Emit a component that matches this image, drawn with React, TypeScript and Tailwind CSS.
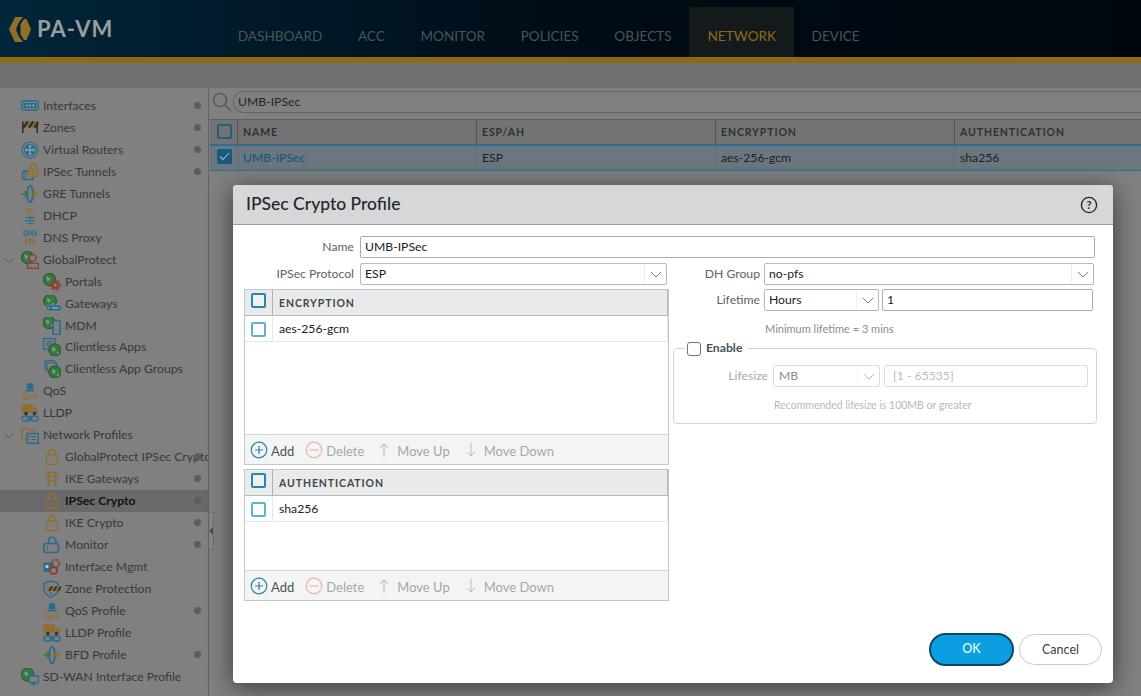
import React from "react";

const T = "#2a6a8a", G = "#8f6f2f", N = "#2e7d3a", R = "#8f3f30", D = "#2b2f32";

const S = ({ children }: { children: React.ReactNode }) => (
  <svg width="18" height="18" viewBox="0 0 18 18" fill="none" strokeWidth="1.2" className="shrink-0">{children}</svg>
);
const Lock = () => (
  <S><rect x="3.5" y="7" width="11" height="9.5" rx="1.2" stroke={G} strokeWidth="1.4" /><path d="M6 7V4.500a3 3 0 0 1 6 0V7" stroke={G} strokeWidth="1.4" /><circle cx="9" cy="11.500" r="1" fill={G} /></S>
);
const Globe = ({ x = 0, y = 0, r = 6.2 }: { x?: number; y?: number; r?: number }) => (
  <g transform={`translate(${x} ${y})`}><circle cx="6.500" cy="6.500" r={r} fill={N} stroke={D} strokeWidth="0.7" /><path d="M3 3.500l3.500 1 1 2-3 2zM8.500 8l2 1-1 2-1-1z" fill="#8a8f8a" /></g>
);
const icons: Record<string, React.ReactNode> = {
  interfaces: <S><rect x="0.700" y="4" width="16.600" height="9" rx="1.500" stroke={T} strokeWidth="1.300" /><rect x="2.500" y="6" width="13" height="5" fill={T} /><path d="M5 8.500h1.500M8.200 8.500h1.500M11.500 8.500H13" stroke="#b8c4cc" strokeWidth="1.300" /></S>,
  zones: <S><rect x="1" y="2.500" width="16" height="6" fill={G} /><path d="M2.500 8.500l4.300-6M8 8.500l4.300-6M13.500 8.500l3.500-5" stroke={D} strokeWidth="2.200" /><path d="M1.800 2.500V14M16.200 2.500V14" stroke={D} strokeWidth="1.600" /></S>,
  routers: <S><circle cx="9" cy="9" r="8" stroke={T} strokeWidth="1.200" /><circle cx="9" cy="9" r="6" fill={T} /><path d="M9 4.500v9M4.500 9h9M7.500 6L9 4.500 10.500 6M7.500 12L9 13.500 10.500 12M6 7.500L4.500 9 6 10.500M12 7.500L13.500 9 12 10.500" stroke="#b8c4cc" strokeWidth="0.800" /></S>,
  tunnels: <S><path d="M3 8h9v8.500H3a1.500 4 0 0 1 0-8.500z" stroke={T} strokeWidth="1.300" /><ellipse cx="3" cy="12.200" rx="1.500" ry="4.200" stroke={T} /><rect x="7.500" y="5.500" width="9.500" height="8" rx="1" fill="#8a7a5a" stroke={G} /><path d="M9.500 5.500V3.500a2.700 2.700 0 0 1 5.400 0v2" stroke={G} strokeWidth="1.400" /><circle cx="12.200" cy="9.200" r="1.300" fill={G} /></S>,
  gre: <S><ellipse cx="9" cy="9" rx="2.800" ry="8.300" stroke={T} strokeWidth="1.700" /><path d="M0.500 9h5.500M3.500 6l3 3-3 3" stroke={N} strokeWidth="1.600" /><path d="M17.500 9H12M14.500 6l-3 3 3 3" stroke={G} strokeWidth="1.600" /></S>,
  dhcp: <S><text x="9" y="7" fontSize="8" fontWeight="700" textAnchor="middle" fill={G} fontFamily="Lato">IP</text><path d="M9 8v6M4.500 10.500h9M3.500 14h11M5.500 16.500h7" stroke={T} strokeWidth="1.200" /></S>,
  dns: <S><text x="9" y="6.500" fontSize="7" fontWeight="700" textAnchor="middle" fill={T} fontFamily="Lato">DNS</text><path d="M9 8v7M3.500 11h11M5 11v5M13 11v5" stroke={G} strokeWidth="1.300" /></S>,
  gp: <S><Globe /><circle cx="11.500" cy="7" r="3.500" fill="#7f7f7f" stroke={R} strokeWidth="1.500" /><path d="M6.500 17.300v-5h11v5z" fill="#7f7f7f" stroke={R} strokeWidth="1.300" /></S>,
  portals: <S><Globe /><circle cx="12.300" cy="12" r="4" fill={R} /><circle cx="12.300" cy="12" r="5" stroke={R} strokeDasharray="1.500 1.200" strokeWidth="1.500" /><circle cx="12.300" cy="12" r="1.500" fill="#8a8a8a" /></S>,
  gateways: <S><Globe x={0.500} y={-0.500} r={6.500} /><rect x="3.500" y="10" width="14.500" height="6" rx="1" fill={T} stroke="#8a9aa4" strokeWidth="0.600" /><path d="M5.500 13h1.500M9 13h6.500" stroke="#c0ccd4" /></S>,
  mdm: <S><Globe x={-0.500} y={-1} /><rect x="10" y="3.500" width="7" height="14" rx="1" fill="#7f7f7f" stroke={T} strokeWidth="1.600" /></S>,
  apps: <S><rect x="0.600" y="0.600" width="11.500" height="10.500" fill="#7f7f7f" stroke={T} strokeWidth="1.300" /><path d="M3 3.500h7M3 5.800h7M3 8h5" stroke={T} /><Globe x={5.500} y={5.500} /></S>,
  groups: <S><rect x="2" y="0.600" width="9.500" height="8" stroke={T} /><rect x="4" y="2.800" width="9.500" height="8.500" fill="#7f7f7f" stroke={T} /><Globe x={5.500} y={5.500} /></S>,
  qos: <S><path d="M9 1a3.300 3.300 0 0 1 3.300 3.300V7.500H5.700V4.300A3.300 3.300 0 0 1 9 1z" fill={T} /><path d="M4.500 8.700h9" stroke={T} strokeWidth="1.400" /><text x="9" y="17" fontSize="8" fontWeight="700" textAnchor="middle" fill={G} fontFamily="Lato">QoS</text></S>,
  lldp: <S><rect x="0.500" y="0.500" width="11.500" height="8.500" fill={G} /><path d="M12.500 3.500h2.500l2.500 3V9h-5z" fill={G} /><circle cx="5" cy="9.500" r="1.700" fill={D} /><circle cx="13.500" cy="9.500" r="1.700" fill={D} /><rect x="1" y="12" width="7.500" height="5" rx="2.500" stroke={T} strokeWidth="1.400" /><rect x="9.500" y="12" width="7.500" height="5" rx="2.500" stroke={T} strokeWidth="1.400" /><path d="M6 14.500h6" stroke={T} strokeWidth="1.400" /></S>,
  profiles: <S><path d="M1 2.500h6l2 2h5V7M1 2.500V13h4" stroke={G} strokeWidth="1.400" /><rect x="6" y="7.500" width="11.300" height="9.800" fill="#7f7f7f" stroke={T} strokeWidth="1.400" /><path d="M8 10.700h1M10.500 10.700H15M8 13.500h1M10.500 13.500H15" stroke={T} /></S>,
  lock: <Lock />,
  torii: <S><path d="M2 2.500h14M3.500 6.500h11M5.500 2.500V16.500M12.500 2.500V16.500M5.500 11h7" stroke={G} strokeWidth="1.500" /></S>,
  monitor: <S><rect x="1" y="7.500" width="14.500" height="9" rx="2" stroke={T} strokeWidth="1.500" /><path d="M5.500 7.500V5a3.700 3.700 0 0 1 7.400 0v4" stroke={T} strokeWidth="1.500" /><path d="M4.500 10v3.500" stroke={T} strokeWidth="1.200" /></S>,
  mgmt: <S><rect x="0.500" y="4.500" width="10" height="9.500" rx="1" fill={T} /><circle cx="4" cy="8.500" r="1.700" fill="#c0ccd4" /><circle cx="12.500" cy="5.500" r="3.800" stroke={R} strokeWidth="2" strokeDasharray="2 1" /><circle cx="10.500" cy="12.500" r="3.500" fill="#7f7f7f" stroke={R} strokeWidth="2" /></S>,
  shield: <S><path d="M8 0.800l7 2.500V9c0 4-3.500 6.500-7 8.300-3.500-1.800-7-4.300-7-8.300V3.300z" stroke={T} strokeWidth="1.400" /><rect x="4" y="6.500" width="14" height="4.500" fill={G} /><path d="M6 11l3.200-4.500M10.500 11l3.200-4.500M15 11l3-4.500" stroke={D} strokeWidth="1.700" /><path d="M8 12v2.500" stroke={T} strokeWidth="1.500" /></S>,
  sdwan: <S><Globe r={6.500} /><rect x="8" y="8" width="9.500" height="6.500" rx="1" fill="#7f7f7f" stroke={T} strokeWidth="1.400" /><path d="M10.500 16.500h4.500M12.700 14.500v2" stroke={T} strokeWidth="1.300" /></S>,
};

type Row = { t: string; i: string; lvl?: 0 | 1; dot?: boolean; open?: boolean; sel?: boolean; up?: boolean };
const rows: Row[] = [
  { t: "Interfaces", i: "interfaces", dot: true },
  { t: "Zones", i: "zones", dot: true },
  { t: "Virtual Routers", i: "routers", dot: true },
  { t: "IPSec Tunnels", i: "tunnels", dot: true },
  { t: "GRE Tunnels", i: "gre" },
  { t: "DHCP", i: "dhcp" },
  { t: "DNS Proxy", i: "dns" },
  { t: "GlobalProtect", i: "gp", open: true },
  { t: "Portals", i: "portals", lvl: 1 },
  { t: "Gateways", i: "gateways", lvl: 1 },
  { t: "MDM", i: "mdm", lvl: 1 },
  { t: "Clientless Apps", i: "apps", lvl: 1, up: true },
  { t: "Clientless App Groups", i: "groups", lvl: 1 },
  { t: "QoS", i: "qos" },
  { t: "LLDP", i: "lldp" },
  { t: "Network Profiles", i: "profiles", open: true },
  { t: "GlobalProtect IPSec Crypto", i: "lock", lvl: 1, dot: true },
  { t: "IKE Gateways", i: "torii", lvl: 1, dot: true },
  { t: "IPSec Crypto", i: "lock", lvl: 1, dot: true, sel: true },
  { t: "IKE Crypto", i: "lock", lvl: 1, dot: true },
  { t: "Monitor", i: "monitor", lvl: 1, dot: true },
  { t: "Interface Mgmt", i: "mgmt", lvl: 1 },
  { t: "Zone Protection", i: "shield", lvl: 1 },
  { t: "QoS Profile", i: "qos", lvl: 1, dot: true },
  { t: "LLDP Profile", i: "lldp", lvl: 1 },
  { t: "BFD Profile", i: "gre", lvl: 1, dot: true },
  { t: "SD-WAN Interface Profile", i: "sdwan" },
];

const Chevron = ({ c = "#7a8287" }: { c?: string }) => (
  <svg width="12" height="7" viewBox="0 0 12 7" fill="none"><path d="M1 1l5 5 5-5" stroke={c} strokeWidth="1" /></svg>
);

const Select = ({ v, w, off }: { v: string; w: string; off?: boolean }) => (
  <div className={`${w} h-[22px] flex items-center shrink-0 rounded-[2px] border ${off ? "border-[#dcdfe0] text-[#868c90] pl-[5px]" : "border-[#b4b8ba] text-[#1c2024] pl-[4px]"} bg-white`}>
    <span className="flex-1">{v}</span>
    <span className={`w-[22px] h-full flex items-center justify-center border-l ${off ? "border-[#f3f4f4]" : "border-[#eeeff0]"}`}>
      <Chevron c={off ? "#b4b9bc" : "#7a8287"} />
    </span>
  </div>
);

const Box = ({ dark }: { dark?: boolean }) => (
  <span className={`block w-[15px] h-[15px] rounded-[2px] border-2 ${dark ? "border-[#2587ad] bg-[#f0f2f2]" : "border-[#5cb2d4] bg-white"}`} />
);

const Toolbar = () => (
  <div className="h-[30px] flex items-center bg-[#f3f5f5] border-t border-[#d0d3d5] pl-[5px] text-[13px] text-[#a3a8ab]">
    <svg width="18" height="18" viewBox="0 0 18 18" fill="none" className="mr-[3px]"><circle cx="9" cy="9" r="7.800" stroke="#2c80a8" strokeWidth="1.200" /><path d="M9 5v8M5 9h8" stroke="#2c80a8" strokeWidth="1.200" /></svg>
    <span className="text-[#4b5358] mr-[11px] pt-[4px]">Add</span>
    <svg width="18" height="18" viewBox="0 0 18 18" fill="none" className="mr-[3px]"><circle cx="9" cy="9" r="7.800" stroke="#eeb4b0" strokeWidth="1.200" /><path d="M4.500 9h9" stroke="#eeb4b0" strokeWidth="1.200" /></svg>
    <span className="mr-[15px] pt-[4px]">Delete</span>
    <svg width="10" height="16" viewBox="0 0 10 16" fill="none" className="mr-[8px]"><path d="M5 15V2M1 6l4-4 4 4" stroke="#b4b9bc" strokeWidth="1" /></svg>
    <span className="mr-[16px] pt-[4px]">Move Up</span>
    <svg width="10" height="16" viewBox="0 0 10 16" fill="none" className="mr-[8px]"><path d="M5 1v13M1 10l4 4 4-4" stroke="#b4b9bc" strokeWidth="1" /></svg>
    <span className="pt-[4px]">Move Down</span>
  </div>
);

const MemberTable = ({ title, item, h }: { title: string; item: string; h: string }) => (
  <div className={`${h} flex flex-col border border-[#c4c7c9]`}>
    <div className="h-[26px] flex items-center bg-[#e9ebeb] border-b border-r border-[#b4b8ba]">
      <span className="w-[28px] h-full pl-[6px] pt-[3px] border-r border-[#aeb2b4] shrink-0"><Box dark /></span>
      <span className="pl-[6px] pt-[2px] text-[10.500px] font-bold tracking-[0.900px] text-[#3f474c]">{title}</span>
    </div>
    <div className="h-[26px] flex items-center border-b border-r border-[#e6e8e8]">
      <span className="w-[28px] h-[24px] pl-[6px] pt-[5px] border-r border-[#e6e8e8] shrink-0"><Box /></span>
      <span className="pl-[6px] pt-[1px] text-[#1c2024]">{item}</span>
    </div>
    <div className="flex-1" />
    <Toolbar />
  </div>
);

export default function App() {
  return (
    <div className="relative w-[1141px] h-[696px] overflow-hidden bg-[#808080] [font-family:Lato,sans-serif] text-[12.200px] flex flex-col">
      <header className="h-[57px] shrink-0 flex items-end bg-gradient-to-r from-[#02263a] via-[#000c16] to-[#00070c]">
        <div className="w-[220px] h-full flex items-center pl-[9px] shrink-0">
          <svg width="22" height="25" viewBox="0 0 22 25" fill="none" className="mr-[6px] mt-[1px]"><path d="M6 0h8L9.500 6 7 12.500 9.500 19l4.500 6H6L0 12.500z" fill="#8f7029" /><path d="M15 2h2.500L22 12.500 17.500 23H15l-3.500-5.500v-10z" fill="#8f7029" /></svg>
          <span className="text-[22px] font-bold tracking-[1px] text-[#9a9e9e]">PA-VM</span>
        </div>
        <nav className="flex h-[50px] text-[13.600px] text-[#4c5357]">
          {["DASHBOARD", "ACC", "MONITOR", "POLICIES", "OBJECTS"].map((n) => (
            <span key={n} className="px-[17.800px] pt-[19px]">{n}</span>
          ))}
          <span className="px-[18px] pt-[19px] bg-[#14191c] text-[#8c6c18]">NETWORK</span>
          <span className="px-[17.500px] pt-[19px]">DEVICE</span>
        </nav>
      </header>
      <div className="h-[6px] shrink-0 bg-[#8c6a16]" />
      <div className="h-[25px] shrink-0 bg-[#6f7072]" />
      <div className="flex flex-1 min-h-0">
        <aside className="relative w-[209px] shrink-0 border-r border-[#626364] pt-[7px] text-[#34393c] overflow-hidden">
          {rows.map((r) => (
            <div key={r.t} className={`relative h-[22px] flex items-center ${r.up ? "-mt-[1px]" : ""} ${r.sel ? "bg-[#69696b] font-bold text-[#101214]" : ""} ${r.lvl ? "pl-[43px]" : "pl-[21px]"}`}>
              {r.open && <span className="absolute left-[3px] top-[8px]"><Chevron c="#5a5f62" /></span>}
              {icons[r.i]}
              <span className="ml-[4px] whitespace-nowrap">{r.t}</span>
              {r.dot && <span className="absolute left-[194px] top-[7px] w-[7px] h-[7px] rounded-full bg-[#5b5c5d]" />}
            </div>
          ))}
        </aside>
        <main className="relative flex-1 min-w-0 pt-[3px] text-[#1c1f21]">
          <div className="flex items-center h-[22px] pl-[3px]">
            <svg width="20" height="20" viewBox="0 0 20 20" fill="none" className="shrink-0 mr-[1px]"><circle cx="8" cy="8" r="6.500" stroke="#4c5053" strokeWidth="1.200" /><path d="M13 13l6 6" stroke="#4c5053" strokeWidth="1.200" /></svg>
            <div className="flex-1 h-full rounded-l-[10px] border border-r-0 border-[#626465] pl-[4px] flex items-center text-[#222527]">UMB-IPSec</div>
          </div>
          <div className="mt-[6px] ml-[1px] h-[27px] flex items-center bg-[#737373] border-t border-b-2 border-t-[#5f6061] border-b-[#2f6f8d] text-[10.500px] font-bold tracking-[0.900px] text-[#2d3134]">
            <span className="w-[28px] h-full pl-[7px] pt-[4px] border-r border-[#555] shrink-0"><span className="block w-[15px] h-[15px] rounded-[2px] border-2 border-[#1f5f7f]" /></span>
            <span className="w-[239px] pl-[5px] pt-[2px] h-full flex items-center border-r border-[#555]">NAME</span>
            <span className="w-[239px] pl-[5px] pt-[2px] h-full flex items-center border-r border-[#555]">ESP/AH</span>
            <span className="w-[239px] pl-[5px] pt-[2px] h-full flex items-center border-r border-[#555]">ENCRYPTION</span>
            <span className="pl-[5px] pt-[2px]">AUTHENTICATION</span>
          </div>
          <div className="ml-[1px] h-[25px] flex items-center bg-[#6a7780] border-b border-[#2f7090]">
            <span className="w-[28px] h-full pl-[7px] pt-[3px] border-r border-[#667078] shrink-0">
              <span className="flex w-[15px] h-[15px] rounded-[2px] bg-[#165a80] items-center justify-center">
                <svg width="11" height="9" viewBox="0 0 11 9" fill="none"><path d="M1 4.500l3 3 6-6.500" stroke="#a8bac6" strokeWidth="1.100" /></svg>
              </span>
            </span>
            <span className="w-[239px] pl-[5px] pt-[1px] h-full flex items-center border-r border-[#667078] text-[#0e5478]">UMB-IPSec</span>
            <span className="w-[239px] pl-[5px] pt-[1px] h-full flex items-center border-r border-[#667078]">ESP</span>
            <span className="w-[239px] pl-[5px] pt-[1px] h-full flex items-center border-r border-[#667078]">aes-256-gcm</span>
            <span className="pl-[5px] pt-[1px]">sha256</span>
          </div>
        </main>
      </div>
      <div className="absolute left-[209px] top-[512px] w-[5px] h-[38px] bg-[#868686] border-r border-y border-[#727272] flex items-center">
        <span className="w-0 h-0 border-y-[4px] border-y-transparent border-r-[4px] border-r-[#4c4c4c]" />
      </div>

      <div className="absolute left-[233px] top-[185px] w-[880px] h-[498px] flex flex-col rounded-[4px] bg-white shadow-[0_4px_24px_rgba(0,0,0,0.55)] overflow-hidden">
        <div className="h-[40px] shrink-0 flex items-center justify-between pl-[13px] pr-[15px] bg-[#d5d7d9] border-b border-[#989da1]">
          <span className="text-[17.500px] font-medium text-[#22272b]">IPSec Crypto Profile</span>
          <svg width="18" height="18" viewBox="0 0 18 18" fill="none"><circle cx="9" cy="9" r="7.600" stroke="#22272b" strokeWidth="1.400" /><text x="9" y="13" fontSize="11" fontWeight="700" textAnchor="middle" fill="#22272b" fontFamily="Lato">?</text></svg>
        </div>
        <div className="flex-1 flex flex-col pl-[11px] pr-[11px] pt-[11px] pb-[17px] text-[#5a6267]">
          <div className="flex items-center gap-[6px] pr-[7px]">
            <span className="w-[110px] text-right shrink-0">Name</span>
            <div className="flex-1 h-[22px] rounded-[2px] border border-[#a8adb0] pl-[4px] flex items-center text-[#1c2024]">UMB-IPSec</div>
          </div>
          <div className="flex mt-[5px]">
            <div className="w-[425px] shrink-0 flex flex-col">
              <div className="flex items-center gap-[6px]">
                <span className="w-[110px] text-right shrink-0">IPSec Protocol</span>
                <Select v="ESP" w="w-[307px]" />
              </div>
              <div className="mt-[4px]"><MemberTable title="ENCRYPTION" item="aes-256-gcm" h="h-[176px]" /></div>
              <div className="mt-[4px]"><MemberTable title="AUTHENTICATION" item="sha256" h="h-[132px]" /></div>
            </div>
            <div className="w-[424px] ml-[4px] shrink-0 flex flex-col">
              <div className="flex items-center gap-[4px]">
                <span className="w-[87px] text-right shrink-0">DH Group</span>
                <Select v="no-pfs" w="w-[330px]" />
              </div>
              <div className="mt-[4px] flex items-center gap-[4px]">
                <span className="w-[87px] text-right shrink-0">Lifetime</span>
                <Select v="Hours" w="w-[115px]" />
                <div className="w-[211px] ml-[-1px] h-[22px] rounded-[2px] border border-[#a8adb0] pl-[4px] flex items-center text-[#1c2024]">1</div>
              </div>
              <div className="mt-[11px] pl-[92px] text-[11px] text-[#868c90] leading-[14px]">Minimum lifetime = 3 mins</div>
              <fieldset className="mt-[5px] h-[83px] rounded-[4px] border border-[#d2d5d7] pl-[12px] pr-[8px]">
                <legend className="flex items-center gap-[5px] px-[1px] font-bold text-[#445259] h-[15px] pr-[6px]">
                  <span className="w-[14px] h-[14px] rounded-[3px] border border-[#69767c]" />
                  Enable
                </legend>
                <div className="flex items-center gap-[5px] mt-[9px]">
                  <span className="w-[83px] -ml-[1px] text-right text-[#a3a8ab] shrink-0">Lifesize</span>
                  <Select v="MB" w="w-[107px]" off />
                  <div className="w-[204px] ml-[-1px] h-[22px] rounded-[2px] border border-[#dcdfe0] pl-[8px] flex items-center text-[#b9bdc0]">[1 - 65535]</div>
                </div>
                <div className="mt-[11px] pl-[88px] text-[10.500px] leading-[14px] text-[#b4b9bc]">Recommended lifesize is 100MB or greater</div>
              </fieldset>
            </div>
          </div>
          <div className="mt-auto flex justify-end items-center gap-[5px]">
            <button className="w-[85px] h-[33px] rounded-full border-2 border-[#0e4763] bg-[#0b9ee0] text-white text-[12.500px]">OK</button>
            <button className="w-[83px] h-[31px] pt-[1px] rounded-full border border-[#c8cbcd] text-[#3a4045] text-[12.500px]">Cancel</button>
          </div>
        </div>
      </div>
    </div>
  );
}
